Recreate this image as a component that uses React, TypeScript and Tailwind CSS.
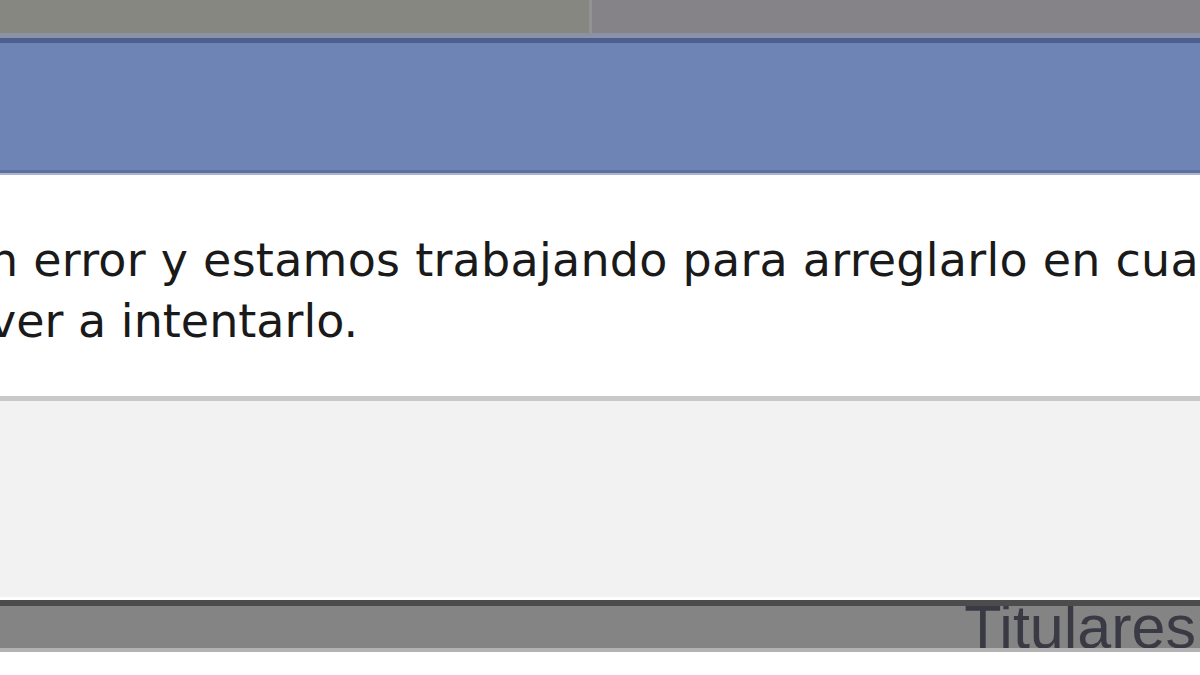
import React from 'react';

const MSG_FONT = { fontFamily: '"DejaVu Sans", Verdana, sans-serif' };
const TAB_FONT = { fontFamily: '"Liberation Sans", Arial, sans-serif' };

const App: React.FC = () => {
  return (
    <div className="w-[1200px] h-[675px] overflow-hidden bg-white flex flex-col">
      {/* top tab strip */}
      <div className="h-[33px] flex shrink-0">
        <div className="w-[589px] bg-[#878782]" />
        <div className="w-[3px] bg-[#939393]" />
        <div className="flex-1 bg-[#858388]" />
      </div>
      <div className="h-[5px] shrink-0 bg-[#8a92a6]" />
      <div className="h-[5px] shrink-0 bg-[#4e5e8e]" />

      {/* dialog title bar */}
      <div className="h-[127px] shrink-0 bg-[#6d84b5]" />
      <div className="h-[3px] shrink-0 bg-[#5d6f9f]" />
      <div className="h-[2px] shrink-0 bg-[#aab5d0]" />

      {/* dialog body */}
      <div
        className="h-[221px] shrink-0 bg-white overflow-hidden pt-[55px] text-[46px] leading-[61px] text-[#1a1a1a]"
        style={MSG_FONT}
      >
        <div className="whitespace-nowrap ml-[-11px] tracking-[0.25px]">n error y estamos trabajando para arreglarlo en cuanto podamos.</div>
        <div className="whitespace-nowrap ml-[-11px]">ver a intentarlo.</div>
      </div>

      {/* footer */}
      <div className="h-[5px] shrink-0 bg-[#c9c9c9]" />
      <div className="h-[196px] shrink-0 bg-[#f2f2f2]" />
      <div className="h-[3px] shrink-0 bg-white" />

      {/* bottom bar */}
      <div className="relative z-10 h-[6px] shrink-0 bg-[#4c4c4c]" />
      <div className="h-[42px] shrink-0 bg-[#848484] flex justify-end pr-[4px]">
        <span
          className="mt-[-9px] h-[51px] overflow-hidden text-[61px] leading-[61px] text-[#3a3a44] whitespace-nowrap"
          style={TAB_FONT}
        >
          Titulares
        </span>
      </div>
      <div className="relative z-10 h-[4px] shrink-0 bg-[#b3b3b3]" />
      <div className="relative z-10 flex-1 bg-white" />
    </div>
  );
};

export default App;
